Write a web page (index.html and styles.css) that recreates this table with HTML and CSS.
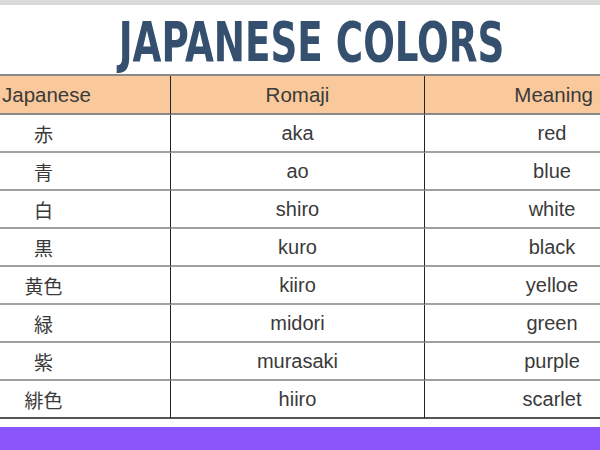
FILE: index.html
```html
<!DOCTYPE html>
<html>
<head>
<meta charset="utf-8">
<link rel="stylesheet" href="styles.css">
</head>
<body>
<div class="page">
  <div class="topbar"></div>
  <div class="title-wrap"><h1 class="title">JAPANESE COLORS</h1></div>
  <div class="table">
    <div class="cell head c1">Japanese</div>
    <div class="cell head c2">Romaji</div>
    <div class="cell head c3">Meaning</div>

    <div class="cell c1 jp">赤</div><div class="cell c2">aka</div><div class="cell c3">red</div>
    <div class="cell c1 jp">青</div><div class="cell c2">ao</div><div class="cell c3">blue</div>
    <div class="cell c1 jp">白</div><div class="cell c2">shiro</div><div class="cell c3">white</div>
    <div class="cell c1 jp">黒</div><div class="cell c2">kuro</div><div class="cell c3">black</div>
    <div class="cell c1 jp">黄色</div><div class="cell c2">kiiro</div><div class="cell c3">yelloe</div>
    <div class="cell c1 jp">緑</div><div class="cell c2">midori</div><div class="cell c3">green</div>
    <div class="cell c1 jp">紫</div><div class="cell c2">murasaki</div><div class="cell c3">purple</div>
    <div class="cell c1 jp last">緋色</div><div class="cell c2 last">hiiro</div><div class="cell c3 last">scarlet</div>
  </div>
  <div class="gap"></div>
  <div class="footer"></div>
</div>
</body>
</html>
```
FILE: styles.css
```css
html, body {
  margin: 0;
  padding: 0;
  background: #ffffff;
}
.page {
  width: 600px;
  height: 450px;
  overflow: hidden;
  display: flex;
  flex-direction: column;
  font-family: "Liberation Sans", Arial, "Noto Sans CJK JP", sans-serif;
}
.topbar {
  height: 5px;
  background: #dadada;
  flex: none;
}
.title-wrap {
  height: 69px;
  flex: none;
  display: flex;
  justify-content: center;
  align-items: flex-start;
  padding-left: 23px;
}
.title {
  margin: 0;
  margin-top: 9px;
  font-family: "DejaVu Sans Condensed", "DejaVu Sans", sans-serif;
  font-weight: bold;
  font-size: 56px;
  line-height: 56px;
  color: #34506e;
  display: inline-block;
  transform: scaleX(0.74);
  white-space: nowrap;
}
.table {
  flex: none;
  display: grid;
  grid-template-columns: 171px 254px 175px;
  grid-template-rows: 39px repeat(8, 38px);
  border-top: 2px solid #8a8a8a;
}
.cell {
  display: flex;
  align-items: center;
  font-size: 20px;
  color: #3a3a3a;
  border-bottom: 2px solid #a0a0a0;
  box-sizing: border-box;
}
.cell.last {
  border-bottom: 2px solid #555555;
}
.head {
  background: #f9c99b;
  border-bottom: 2px solid #8a8a8a;
  font-size: 20.5px;
}
.c1, .c2 {
  border-right: 1px solid #222222;
}
.head.c1 {
  justify-content: flex-start;
  padding-left: 2px;
}
.head.c2 {
  justify-content: center;
}
.head.c3 {
  justify-content: flex-end;
  padding-right: 7px;
}
.c1 {
  justify-content: center;
  padding-right: 83px;
}
.c2 {
  justify-content: center;
}
.c3 {
  justify-content: center;
  padding-left: 79px;
}
.jp {
  font-family: "Noto Sans CJK JP", sans-serif;
  font-size: 19px;
}
.gap {
  height: 8px;
  flex: none;
}
.footer {
  flex: 1;
  background: #8b55fc;
}
```
